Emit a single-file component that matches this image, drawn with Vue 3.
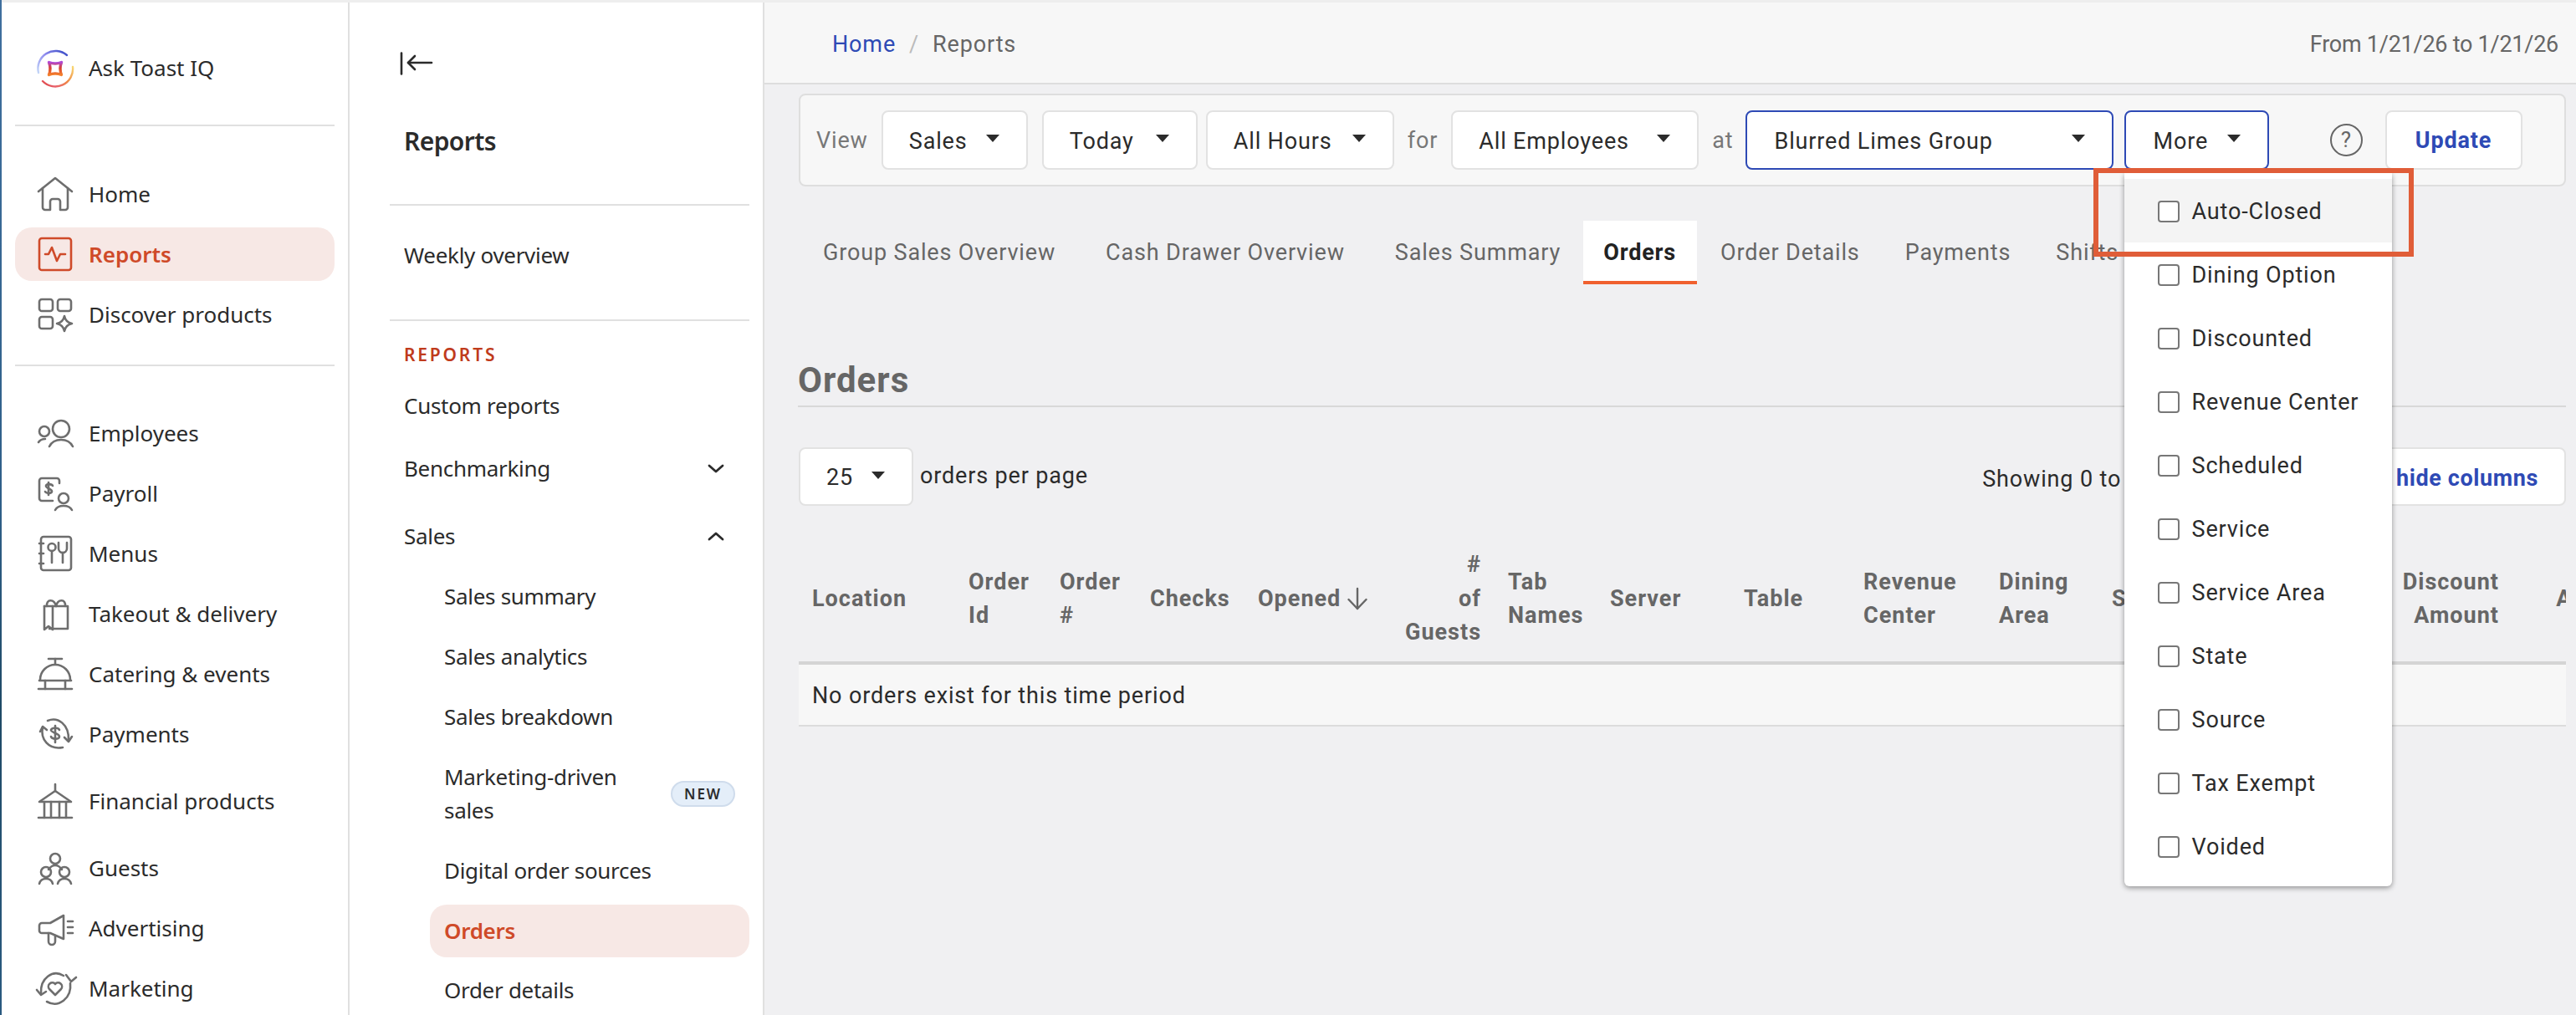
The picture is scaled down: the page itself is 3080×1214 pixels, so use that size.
<script setup>
const icons = {
  home: ['M1 18 21 2l20 16', 'M6 14v23a3 3 0 0 0 3 3h6V30a3 3 0 0 1 3-3h6a3 3 0 0 1 3 3v10h6a3 3 0 0 0 3-3V14'],
  reports: ['M5 2h32a3 3 0 0 1 3 3v32a3 3 0 0 1-3 3H5a3 3 0 0 1-3-3V5a3 3 0 0 1 3-3z', 'M9 21h4l4-8 6 16 4-8h6'],
  discover: [
    'M5 3h10a3 3 0 0 1 3 3v8a3 3 0 0 1-3 3H5a3 3 0 0 1-3-3V6a3 3 0 0 1 3-3z',
    'M27 3h10a3 3 0 0 1 3 3v8a3 3 0 0 1-3 3H27a3 3 0 0 1-3-3V6a3 3 0 0 1 3-3z',
    'M5 24h10a3 3 0 0 1 3 3v8a3 3 0 0 1-3 3H5a3 3 0 0 1-3-3v-8a3 3 0 0 1 3-3z',
    'M32 23c1 5 4 8 9 9-5 1-8 4-9 9-1-5-4-8-9-9 5-1 8-4 9-9z'
  ],
  employees: [
    'M28 6a10 10 0 1 1 0 20 10 10 0 0 1 0-20z',
    'M8 13a6 6 0 1 1 0 12 6 6 0 0 1 0-12z',
    'M14 37c3-6 8-8 14-8s11 2 14 8',
    'M1 32c2-3 4-4 8-4'
  ],
  payroll: [
    'M26 9V6a3 3 0 0 0-3-3H5a3 3 0 0 0-3 3v21a3 3 0 0 0 3 3h13',
    'M18 12c-1-2-7-3-8 0s8 4 7 7-7 2-8 0', 'M13 8v15',
    'M31 21a6 6 0 1 1 0 12 6 6 0 0 1 0-12z',
    'M21 41c2-4 6-5 10-5s8 1 10 5'
  ],
  menus: [
    'M7 1h30a3 3 0 0 1 3 3v34a3 3 0 0 1-3 3H7a3 3 0 0 1-3-3V4a3 3 0 0 1 3-3z',
    'M2 9h5', 'M2 21h5', 'M2 33h5',
    'M17 9a4 4 0 1 1 0 9 4 4 0 0 1 0-9z', 'M17 18v14',
    'M25 8v7a5 5 0 0 0 10 0V8', 'M30 20v12'
  ],
  takeout: [
    'M8 12h28v27H14', 'M8 12v28l5-4 5 4V12',
    'M22 12c-2-9-12-9-11 0', 'M22 12c2-9 12-9 11 0'
  ],
  catering: ['M13 3h16', 'M21 3v6', 'M3 28a18 18 0 0 1 36 0', 'M2 29h38', 'M9 29v10', 'M33 29v10', 'M1 39h40'],
  payments: [
    'M3 18l3-6 5 4', 'M6 13C3 27 13 40 30 37', 'M12 5C24 0 38 9 37 29', 'M32 25l5 5 4-6',
    'M26 16c-1-3-9-3-10 0s10 4 10 8-9 3-10 0', 'M21 11v20'
  ],
  financial: ['M21 1v8', 'M2 22 21 9l19 13', 'M3 22h36', 'M8 22v19', 'M16 22v19', 'M26 22v19', 'M34 22v19', 'M1 41h40'],
  guests: [
    'M21 4a6 6 0 1 1 0 12 6 6 0 0 1 0-12z', 'M13 23c2-3 5-5 8-5s6 2 8 5',
    'M10 20a6 6 0 1 1 0 12 6 6 0 0 1 0-12z', 'M2 40c1-4 4-6 8-6s7 2 8 6',
    'M32 20a6 6 0 1 1 0 12 6 6 0 0 1 0-12z', 'M24 40c1-4 4-6 8-6s7 2 8 6'
  ],
  advertising: [
    'M31 6v28l-16-7H5a3 3 0 0 1-3-3v-6a3 3 0 0 1 3-3h10L31 6z',
    'M13 27v10a4 4 0 0 0 8 0V30', 'M36 13h6', 'M36 20h6', 'M36 27h6'
  ],
  marketing: [
    'M31 6C18-2 3 9 4 27', 'M-1 23l5 6 6-4',
    'M11 37c14 8 30-4 28-22', 'M34 5l6 8 6-5',
    'M21 29l-7-7a4.5 4.5 0 0 1 7-6 4.5 4.5 0 0 1 7 6z'
  ]
};

const primaryNav = [
  { label: 'Home', icon: 'home' },
  { label: 'Reports', icon: 'reports', active: true },
  { label: 'Discover products', icon: 'discover' }
];

const productNav = [
  { label: 'Employees', icon: 'employees' },
  { label: 'Payroll', icon: 'payroll' },
  { label: 'Menus', icon: 'menus' },
  { label: 'Takeout & delivery', icon: 'takeout' },
  { label: 'Catering & events', icon: 'catering' },
  { label: 'Payments', icon: 'payments' },
  { label: 'Financial products', icon: 'financial', tall: true },
  { label: 'Guests', icon: 'guests' },
  { label: 'Advertising', icon: 'advertising' },
  { label: 'Marketing', icon: 'marketing' }
];

const tabs = ['Group Sales Overview', 'Cash Drawer Overview', 'Sales Summary', 'Orders', 'Order Details', 'Payments', 'Shifts'];

const columns = [
  { title: ['Location'], width: 187 },
  { title: ['Order', 'Id'], width: 109 },
  { title: ['Order', '#'], width: 108 },
  { title: ['Checks'], width: 129 },
  { title: ['Opened'], width: 169, sorted: true },
  { title: ['#', 'of', 'Guests'], width: 130, right: true },
  { title: ['Tab', 'Names'], width: 122 },
  { title: ['Server'], width: 160 },
  { title: ['Table'], width: 143 },
  { title: ['Revenue', 'Center'], width: 162 },
  { title: ['Dining', 'Area'], width: 135 },
  { title: ['Service'], width: 292 },
  { title: ['Discount', 'Amount'], width: 203, right: true },
  { title: ['Amount'], width: 170, right: true }
];

const moreOptions = ['Auto-Closed', 'Dining Option', 'Discounted', 'Revenue Center', 'Scheduled', 'Service', 'Service Area', 'State', 'Source', 'Tax Exempt', 'Voided'];
</script>

<template>
  <div class="page">
    <div class="desktop-edge"></div>
    <div class="window">
      <div class="top-strip"></div>
      <div class="shell">
        <!-- Main nav -->
        <nav class="nav-main">
          <div class="logo-row">
            <svg class="logo" viewBox="0 0 46 46" width="46" height="46" fill="none" stroke-linecap="round">
              <defs>
                <linearGradient id="ringA" x1="1" y1="0" x2="0" y2="1">
                  <stop offset="0" stop-color="#3347c4" />
                  <stop offset="0.45" stop-color="#8f8bee" />
                  <stop offset="1" stop-color="#c3d6f8" />
                </linearGradient>
                <linearGradient id="ringB" x1="1" y1="0" x2="0" y2="1">
                  <stop offset="0" stop-color="#f8d774" />
                  <stop offset="0.45" stop-color="#f08a45" />
                  <stop offset="0.8" stop-color="#e8606e" />
                  <stop offset="1" stop-color="#d8382c" />
                </linearGradient>
                <linearGradient id="starFill" x1="0.5" y1="0" x2="0.5" y2="1">
                  <stop offset="0" stop-color="#b04ad6" />
                  <stop offset="0.45" stop-color="#d8402e" />
                  <stop offset="1" stop-color="#f4802c" />
                </linearGradient>
              </defs>
              <path d="M37 7A21 21 0 0 0 3 28" stroke="url(#ringA)" stroke-width="2.4" />
              <path d="M44 21A21 21 0 0 1 8 38" stroke="url(#ringB)" stroke-width="2.4" />
              <path d="M15.5 15.5q7.500 3 15 0-3 7.500 0 15-7.500-3-15 0 3-7.500 0-15z" stroke="url(#starFill)" stroke-width="3.4" stroke-linejoin="round" />
            </svg>
            <span>Ask Toast IQ</span>
          </div>
          <div class="nav-divider first"></div>
          <a
            v-for="item in primaryNav"
            :key="item.label"
            class="nav-item"
            :class="{ active: item.active }"
          >
            <svg class="nav-icon" viewBox="0 0 42 42" width="42" height="42" fill="none" stroke-width="2.6" stroke-linecap="round" stroke-linejoin="round">
              <path v-for="d in icons[item.icon]" :key="d" :d="d" />
            </svg>
            <span>{{ item.label }}</span>
          </a>
          <div class="nav-divider second"></div>
          <a
            v-for="item in productNav"
            :key="item.label"
            class="nav-item"
            :class="{ tall: item.tall }"
          >
            <svg class="nav-icon" viewBox="0 0 42 42" width="42" height="42" fill="none" stroke-width="2.6" stroke-linecap="round" stroke-linejoin="round">
              <path v-for="d in icons[item.icon]" :key="d" :d="d" />
            </svg>
            <span>{{ item.label }}</span>
          </a>
        </nav>

        <!-- Reports sub nav -->
        <nav class="nav-sub">
          <svg class="collapse" viewBox="0 0 40 28" width="40" height="28" fill="none" stroke="#2b2b2b" stroke-width="2.6" stroke-linecap="round" stroke-linejoin="round">
            <path d="M2 1.500v25" />
            <path d="M38 13H10" />
            <path d="M18 5l-8 8 8 8" />
          </svg>
          <div class="sub-title">Reports</div>
          <div class="sub-divider d1"></div>
          <a class="sub-row weekly">Weekly overview</a>
          <div class="sub-divider d2"></div>
          <div class="section-label">REPORTS</div>
          <a class="sub-row custom">Custom reports</a>
          <a class="sub-row bench">
            <span>Benchmarking</span>
            <svg class="chevron" viewBox="0 0 20 11" width="20" height="11" fill="none" stroke="#2b2b2b" stroke-width="2.8" stroke-linecap="round" stroke-linejoin="round">
              <path d="M2 2l8 7 8-7" />
            </svg>
          </a>
          <a class="sub-row sales">
            <span>Sales</span>
            <svg class="chevron" viewBox="0 0 20 11" width="20" height="11" fill="none" stroke="#2b2b2b" stroke-width="2.8" stroke-linecap="round" stroke-linejoin="round">
              <path d="M2 9l8-7 8 7" />
            </svg>
          </a>
          <a class="sub-row child">Sales summary</a>
          <a class="sub-row child">Sales analytics</a>
          <a class="sub-row child">Sales breakdown</a>
          <a class="sub-row child two-line">
            <span class="wrap-label">Marketing-driven sales</span>
            <span class="new-badge">NEW</span>
          </a>
          <a class="sub-row child">Digital order sources</a>
          <a class="sub-row child current">Orders</a>
          <a class="sub-row child after-current">Order details</a>
        </nav>

        <!-- Main content -->
        <main class="content">
          <header class="crumbs">
            <div class="crumb-path">
              <a class="crumb-link">Home</a>
              <span class="crumb-slash">/</span>
              <span>Reports</span>
            </div>
            <div class="date-range">From 1/21/26 to 1/21/26</div>
          </header>

          <div class="body">
            <div class="filter-bar">
              <span class="filter-word">View</span>
              <button class="select w-sales"><span>Sales</span><i class="caret"></i></button>
              <button class="select w-today"><span>Today</span><i class="caret"></i></button>
              <button class="select w-hours"><span>All Hours</span><i class="caret"></i></button>
              <span class="filter-word">for</span>
              <button class="select w-employees"><span>All Employees</span><i class="caret"></i></button>
              <span class="filter-word">at</span>
              <button class="select focused w-group"><span>Blurred Limes Group</span><i class="caret"></i></button>
              <div class="more-wrap">
                <button class="select focused w-more"><span>More</span><i class="caret"></i></button>
                <div class="more-menu">
                  <label v-for="(opt, i) in moreOptions" :key="opt" class="more-item" :class="{ hovered: i === 0 }">
                    <span class="checkbox"></span>
                    <span>{{ opt }}</span>
                  </label>
                </div>
                <div class="callout"></div>
              </div>
              <span class="help">?</span>
              <button class="update">Update</button>
            </div>

            <div class="tabs">
              <a v-for="tab in tabs" :key="tab" class="tab" :class="{ active: tab === 'Orders' }">{{ tab }}</a>
            </div>

            <h2 class="heading">Orders</h2>

            <div class="table-tools">
              <button class="select w-page"><span>25</span><i class="caret"></i></button>
              <span class="per-page">orders per page</span>
              <span class="showing">Showing 0 to 0 of 0 orders</span>
              <button class="columns-btn"><span>Show or hide columns</span></button>
            </div>

            <div class="table-wrap">
              <table class="orders">
                <colgroup>
                  <col v-for="col in columns" :key="col.title.join()" :style="{ width: col.width + 'px' }" />
                </colgroup>
                <thead>
                  <tr>
                    <th v-for="col in columns" :key="col.title.join()" :class="{ right: col.right }">
                      <div v-for="line in col.title" :key="line">
                        {{ line }}
                        <svg v-if="col.sorted" class="sort" viewBox="0 0 24 28" width="24" height="28" fill="none" stroke="#666" stroke-width="2.4" stroke-linecap="round" stroke-linejoin="round">
                          <path d="M12 2v24" />
                          <path d="M1.500 15 12 26l10.500-11" />
                        </svg>
                      </div>
                    </th>
                  </tr>
                </thead>
                <tbody>
                  <tr>
                    <td :colspan="columns.length">No orders exist for this time period</td>
                  </tr>
                </tbody>
              </table>
            </div>
          </div>
        </main>
      </div>
    </div>
  </div>
</template>

<style>
html,
body {
  margin: 0;
  height: 100%;
  overflow: hidden;
}
</style>

<style scoped>
.page {
  display: flex;
  width: 3080px;
  height: 1214px;
  overflow: hidden;
  background: #fff;
  font-family: "Noto Sans", sans-serif;
  color: #2b2b2b;
}

.desktop-edge {
  flex: 0 0 2px;
  background: linear-gradient(#3f6f9e, #2f5f88 50%, #1f4a66 70%, #2a5a80);
}

.window {
  flex: 1;
  min-width: 0;
  display: flex;
  flex-direction: column;
}

.top-strip {
  flex: 0 0 3px;
  background: #eeeeee;
}

.shell {
  flex: 1;
  min-height: 0;
  display: flex;
}

/* Main nav */
.nav-main {
  flex: 0 0 416px;
  box-sizing: border-box;
  border-right: 2px solid #e0e0e0;
  padding: 43px 16px 0 16px;
  font-size: 26px;
}

.logo-row {
  display: flex;
  align-items: center;
  height: 72px;
  padding-left: 25px;
  gap: 17px;
}

.logo-row span {
  margin-top: -2px;
}

.nav-divider {
  height: 2px;
  background: #e0e0e0;
}

.nav-divider.first {
  margin: 31px 0 49px;
}

.nav-divider.second {
  margin: 28px 0 48px;
}

.nav-item {
  display: flex;
  align-items: center;
  gap: 19px;
  height: 64px;
  margin-bottom: 8px;
  padding-left: 27px;
  border-radius: 20px;
  stroke: #6e6e6e;
}

.nav-item.tall {
  height: 80px;
}

.nav-item.active {
  background: #f7e8e5;
  color: #cf4a29;
  stroke: #cf4a29;
  font-weight: 600;
}

.nav-icon {
  flex: none;
  overflow: visible;
}

/* Sub nav */
.nav-sub {
  flex: 0 0 496px;
  box-sizing: border-box;
  border-right: 2px solid #e0e0e0;
  padding: 0 16px 0 48px;
  font-size: 26px;
  letter-spacing: -0.3px;
}

.collapse {
  display: block;
  margin: 59px 0 0 12px;
}

.sub-title {
  margin-top: 54px;
  padding-left: 17px;
  font-size: 30px;
  line-height: 50px;
  font-weight: 600;
  letter-spacing: -0.6px;
}

.sub-divider {
  height: 2px;
  background: #e0e0e0;
}

.sub-divider.d1 {
  margin-top: 50px;
}

.sub-divider.d2 {
  margin-top: 40px;
}

.section-label {
  margin-top: 25px;
  padding-left: 17px;
  font-size: 21px;
  line-height: 30px;
  font-weight: 600;
  letter-spacing: 2.8px;
  color: #c03b1c;
}

.sub-row {
  box-sizing: border-box;
  display: flex;
  align-items: center;
  justify-content: space-between;
  height: 72px;
  padding: 0 30px 2px 17px;
}

.sub-row.weekly {
  margin-top: 24px;
}

.sub-row.custom {
  margin-top: 11px;
}

.sub-row.bench {
  margin-top: 3px;
}

.sub-row.sales {
  margin-top: 9px;
}

.sub-row.child {
  padding: 0 17px 2px 65px;
}

.sub-row.two-line {
  height: 112px;
  line-height: 40px;
}

.wrap-label {
  width: 250px;
}

.new-badge {
  box-sizing: border-box;
  width: 77px;
  height: 31px;
  border: 2px solid #cfdcec;
  border-radius: 16px;
  background: #e4eef9;
  font-size: 17px;
  line-height: 27px;
  font-weight: 600;
  letter-spacing: 2px;
  text-align: center;
}

.sub-row.current {
  height: 63px;
  margin: 4px 0 0 48px;
  padding-left: 17px;
  border-radius: 20px;
  background: #f7e8e5;
  color: #cf4a29;
  font-weight: 600;
}

.sub-row.after-current {
  margin-top: 4px;
}

/* Content */
.content {
  flex: 1;
  min-width: 0;
  display: flex;
  flex-direction: column;
  background: #f0f0f2;
  font-family: Roboto, sans-serif;
  font-size: 27px;
  letter-spacing: 0.85px;
}

.crumbs {
  flex: none;
  box-sizing: border-box;
  height: 98px;
  display: flex;
  align-items: center;
  justify-content: space-between;
  padding: 3px 21px 0 81px;
  background: #f7f7f7;
  border-bottom: 2px solid #dddddd;
  color: #666;
}

.crumb-path {
  display: flex;
  align-items: center;
}

.crumb-link {
  color: #2e4ab5;
}

.crumb-slash {
  margin: 0 16px;
  color: #bbb;
}

.date-range {
  letter-spacing: -0.25px;
}

.body {
  padding: 11px 12px 0 41px;
}

.filter-bar {
  box-sizing: border-box;
  height: 111px;
  display: flex;
  align-items: center;
  gap: 16px;
  padding-left: 19px;
  background: #f7f7f7;
  border: 2px solid #dedede;
  border-radius: 8px;
}

.filter-word {
  color: #777;
}

.select {
  box-sizing: border-box;
  height: 71px;
  display: flex;
  align-items: center;
  justify-content: space-between;
  padding: 0 32px 0 31px;
  background: #fff;
  border: 2px solid #e2e2e2;
  border-radius: 8px;
  color: #2b2b2b;
  font: inherit;
  letter-spacing: inherit;
}

.select span {
  margin-top: 2px;
}

.select.focused {
  border-color: #2e4ab5;
  padding-left: 33px;
}

.caret {
  width: 0;
  height: 0;
  margin-top: -4px;
  border-left: 8px solid transparent;
  border-right: 8px solid transparent;
  border-top: 9px solid #2b2b2b;
}

.w-sales { width: 175px; }
.w-today { width: 186px; margin-left: 1px; }
.w-hours { width: 225px; margin-left: -6px; }
.w-employees { width: 296px; }
.w-group { width: 440px; margin-left: -2px; }
.w-more { width: 173px; }
.w-page { width: 137px; height: 70px; padding: 0 32px 0 31px; }

.more-wrap {
  position: relative;
  margin-left: -3px;
}

.more-menu {
  position: absolute;
  z-index: 5;
  top: 75px;
  left: 0;
  box-sizing: border-box;
  width: 320px;
  padding: 7px 0 10px;
  background: #fff;
  border-radius: 0 0 6px 6px;
  box-shadow: 0 2px 6px rgba(0, 0, 0, 0.4);
}

.more-item {
  display: flex;
  align-items: center;
  gap: 15px;
  height: 76px;
  padding: 2px 0 0 40px;
  box-sizing: border-box;
}

.more-item.hovered {
  background: #f4f4f4;
}

.checkbox {
  box-sizing: border-box;
  width: 26px;
  height: 26px;
  background: #fff;
  border: 2px solid #777;
  border-radius: 4px;
}

.callout {
  position: absolute;
  z-index: 6;
  top: 69px;
  left: -37px;
  box-sizing: border-box;
  width: 383px;
  height: 106px;
  border: 6px solid #e05d38;
}

.help {
  box-sizing: border-box;
  width: 39px;
  height: 39px;
  margin-left: 57px;
  border: 2.5px solid #666;
  border-radius: 50%;
  font-size: 26px;
  line-height: 34px;
  letter-spacing: 0;
  text-align: center;
  color: #666;
}

.update {
  box-sizing: border-box;
  width: 164px;
  height: 71px;
  margin-left: 11px;
  background: #fff;
  border: 2px solid #e2e2e2;
  border-radius: 8px;
  color: #2e4ab5;
  font: inherit;
  font-weight: 700;
  letter-spacing: inherit;
}

.tabs {
  display: flex;
  height: 76px;
  margin-top: 41px;
  padding-left: 29px;
}

.tab {
  box-sizing: border-box;
  height: 76px;
  margin-right: 60px;
  line-height: 76px;
  color: #666;
  white-space: nowrap;
}

.tab:nth-child(n + 5) {
  margin-right: 54px;
}

.tab.active {
  margin: 0 28px 0 -33px;
  padding: 0 25px 0 24px;
  background: #fff;
  border-bottom: 4px solid #f0602f;
  color: #222;
  font-weight: 700;
}

.heading {
  margin: 90px 0 0 -1px;
  padding-bottom: 5px;
  border-bottom: 2px solid #d8d8d8;
  font-size: 42px;
  line-height: 50px;
  font-weight: 700;
  color: #666;
  letter-spacing: 1px;
}

.table-tools {
  display: flex;
  align-items: center;
  margin-top: 48px;
}

.per-page {
  margin: -2px 0 0 8px;
}

.showing {
  margin-left: auto;
  margin-top: 6px;
}

.columns-btn {
  box-sizing: border-box;
  height: 70px;
  margin-left: 13px;
  padding: 3px 31px 0 33px;
  background: #fff;
  border: 2px solid #e2e2e2;
  border-radius: 8px;
  color: #2e4ab5;
  font: inherit;
  font-weight: 700;
  letter-spacing: 0.6px;
}

.table-wrap {
  margin-top: 35px;
  overflow: hidden;
}

.orders {
  table-layout: fixed;
  width: 2219px;
  border-collapse: collapse;
}

.orders th {
  height: 150px;
  padding: 1px 16px 0;
  border-bottom: 4px solid #d4d4d4;
  text-align: left;
  vertical-align: middle;
  font-weight: 700;
  letter-spacing: 1px;
  line-height: 40.5px;
  color: #666;
}

.orders th.right {
  text-align: right;
}

.sort {
  vertical-align: -5px;
}

.orders td {
  height: 70px;
  padding: 2px 16px 0;
  background: #f7f7f7;
  border-bottom: 2px solid #dcdcdc;
}
</style>
